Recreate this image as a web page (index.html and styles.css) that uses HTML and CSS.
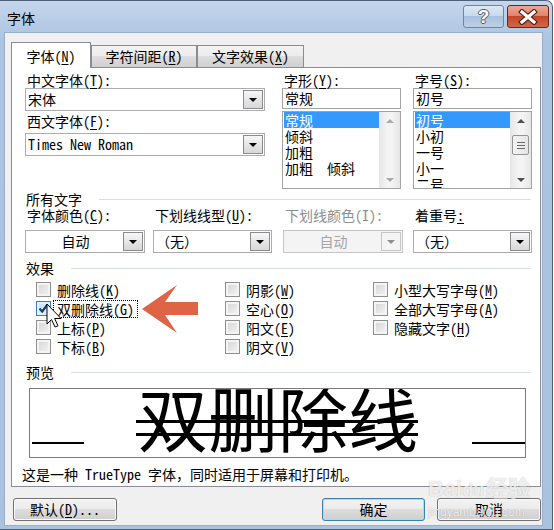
FILE: index.html
```html
<!DOCTYPE html>
<html lang="zh-CN">

<head>
  <meta charset="UTF-8">
  <title>字体</title>
  <link rel="stylesheet" href="styles.css">
</head>

<body>

  <div class="window">
    <div class="titlebar">
      <span class="title">字体</span>
      <div class="caption">
        <div class="cap-btn help">?</div>
        <div class="cap-btn close">
          <svg width="20" height="16" viewBox="0 0 20 16">
            <path d="M4 3 L16 13 M16 3 L4 13" stroke="#4a1e16" stroke-width="5.5" stroke-linecap="square" />
            <path d="M4 3 L16 13 M16 3 L4 13" stroke="#fff" stroke-width="3.2" stroke-linecap="square" />
          </svg>
        </div>
      </div>
    </div>

    <div class="client">
      <div class="tabs">
        <div class="tab active">字体(<u>N</u>)</div>
        <div class="tab">字符间距(<u>R</u>)</div>
        <div class="tab">文字效果(<u>X</u>)</div>
      </div>

      <div class="panel">
        <!-- 字体 / 字形 / 字号 -->
        <div class="font-grid">
          <div>
            <div class="label">中文字体(<u>T</u>):</div>
            <div class="combo wide"><span class="combo-text">宋体</span><span class="drop"></span></div>
            <div class="label second">西文字体(<u>F</u>):</div>
            <div class="combo wide gap"><span class="combo-text">Times New Roman</span><span class="drop"></span></div>
          </div>
          <div>
            <div class="label">字形(<u>Y</u>):</div>
            <div class="textbox">常规</div>
            <div class="listbox">
              <ul class="items">
                <li class="sel">常规</li>
                <li>倾斜</li>
                <li>加粗</li>
                <li>加粗&nbsp;&nbsp;倾斜</li>
              </ul>
              <div class="scrollbar off">
                <span class="arr up"></span>
                <span class="arr down"></span>
              </div>
            </div>
          </div>
          <div>
            <div class="label">字号(<u>S</u>):</div>
            <div class="textbox">初号</div>
            <div class="listbox">
              <ul class="items">
                <li class="sel">初号</li>
                <li>小初</li>
                <li>一号</li>
                <li>小一</li>
                <li>二号</li>
              </ul>
              <div class="scrollbar">
                <span class="arr up"></span>
                <span class="thumb"></span>
                <span class="arr down"></span>
              </div>
            </div>
          </div>
        </div>

        <!-- 所有文字 -->
        <div class="group-head">所有文字</div>
        <div class="attr-grid">
          <div>
            <div class="label">字体颜色(<u>C</u>):</div>
            <div class="combo w120"><span class="combo-text center">自动</span><span class="drop"></span></div>
          </div>
          <div>
            <div class="label">下划线线型(<u>U</u>):</div>
            <div class="combo w119"><span class="combo-text">（无）</span><span class="drop"></span></div>
          </div>
          <div>
            <div class="label disabled">下划线颜色(I):</div>
            <div class="combo w120 disabled"><span class="combo-text center">自动</span><span class="drop"></span></div>
          </div>
          <div>
            <div class="label">着重号<u>:</u></div>
            <div class="combo w119"><span class="combo-text">（无）</span><span class="drop"></span></div>
          </div>
        </div>

        <!-- 效果 -->
        <div class="group-head effects-head">效果</div>
        <div class="effects">
          <div class="effect-col">
            <div class="check"><span class="box"></span><span class="check-label">删除线(<u>K</u>)</span></div>
            <div class="check"><span class="box checked">
                <svg width="13" height="13" viewBox="0 0 13 13">
                  <path d="M2.5 6.5 L5.2 9.5 L10.5 2.5" fill="none" stroke="#1d3a7a" stroke-width="2.2" />
                </svg></span><span class="check-label focus">双删除线(<u>G</u>)</span></div>
            <div class="check"><span class="box"></span><span class="check-label">上标(<u>P</u>)</span></div>
            <div class="check"><span class="box"></span><span class="check-label">下标(<u>B</u>)</span></div>
          </div>
          <div class="effect-col">
            <div class="check"><span class="box"></span><span class="check-label">阴影(<u>W</u>)</span></div>
            <div class="check"><span class="box"></span><span class="check-label">空心(<u>O</u>)</span></div>
            <div class="check"><span class="box"></span><span class="check-label">阳文(<u>E</u>)</span></div>
            <div class="check"><span class="box"></span><span class="check-label">阴文(<u>V</u>)</span></div>
          </div>
          <div class="effect-col">
            <div class="check"><span class="box"></span><span class="check-label">小型大写字母(<u>M</u>)</span></div>
            <div class="check"><span class="box"></span><span class="check-label">全部大写字母(<u>A</u>)</span></div>
            <div class="check"><span class="box"></span><span class="check-label">隐藏文字(<u>H</u>)</span></div>
          </div>
        </div>

        <!-- 预览 -->
        <div class="group-head preview-head">预览</div>
        <div class="preview">
          <span class="base-line"></span>
          <div class="sample"><span>双删除线</span></div>
          <span class="base-line right"></span>
        </div>
        <p class="note">这是一种 TrueType 字体，同时适用于屏幕和打印机。</p>
      </div>

      <div class="buttons">
        <div class="btn">默认(<u>D</u>)...</div>
        <div class="btn default">确定</div>
        <div class="btn">取消</div>
      </div>
    </div>

    <!-- 箭头和鼠标 -->
    <svg class="overlay" width="553" height="530" viewBox="0 0 553 530">
      <polygon points="142,309 177,285 165,302 198,302 198,315 165,315 177,333" fill="#df6445" />
      <path d="M47 304 L47 324 L51.5 319.5 L55 327 L58 325.8 L54.6 318.5 L61 318.5 Z" fill="#fff" stroke="#000" stroke-width="1" />
    </svg>

    <div class="watermark">
      <div class="wm-big">Bai<span class="paw">du</span>经验</div>
      <div class="wm-small">jingyan.baidu.com</div>
    </div>
  </div>

</body>

</html>
```

FILE: styles.css
```css
* {
  box-sizing: border-box;
}

body {
  margin: 0;
  background: #fff;
  font-family: "Noto Sans Mono CJK SC", "Noto Sans CJK SC", sans-serif;
  font-size: 14px;
  color: #000;
}

u {
  text-decoration-thickness: 1px;
  text-underline-offset: 2px;
}

.window {
  position: relative;
  width: 553px;
  height: 530px;
  border: 1px solid #4e6078;
  border-left: none;
  border-radius: 0 7px 0 0;
  background: linear-gradient(#c4d6ec, #abc4e1 40px, #a9c2df);
  padding: 0 9px 3px 4px;
}

.titlebar {
  height: 31px;
  margin: 0 -9px 0 -4px;
  display: flex;
  justify-content: space-between;
  align-items: flex-start;
}

.title {
  margin-top: 9px;
  padding-left: 7px;
  line-height: 16px;
}

.caption {
  display: flex;
  gap: 3px;
  margin-top: 4px;
  padding-right: 3px;
}

.cap-btn {
  width: 41px;
  height: 23px;
  border-radius: 3px;
  display: flex;
  align-items: center;
  justify-content: center;
}

.help {
  border: 1px solid #6d84a3;
  background: linear-gradient(#dce7f5, #c8d8ec 50%, #a9c1de 50%, #bcd0e7);
  color: #fff;
  font-family: "Liberation Sans", sans-serif;
  font-weight: bold;
  font-size: 19px;
  text-shadow: 1px 0 0 #4c5d75, -1px 0 0 #4c5d75, 0 1px 0 #4c5d75, 0 -1px 0 #4c5d75;
}

.close {
  width: 42px;
  border: 1px solid #6b2518;
  background: linear-gradient(#eaa896, #da826b 50%, #c3462b 50%, #d2684c);
}

.client {
  height: 494px;
  background: #f0f0f0;
  border: 1px solid #9aaec8;
  padding: 9px 2px 0 6px;
}

/* tabs */
.tabs {
  display: flex;
  align-items: flex-start;
  height: 26px;
  margin-bottom: -1px;
  position: relative;
  z-index: 1;
}

.tab {
  height: 22px;
  margin-top: 3px;
  border: 1px solid #898c95;
  border-bottom: none;
  background: linear-gradient(#f3f3f3, #ebebeb 50%, #dddddd 50%, #d0d0d0);
  line-height: 20px;
  text-align: center;
  white-space: nowrap;
}

.tab.active {
  height: 26px;
  margin-top: 0;
  width: 80px;
  background: #fff;
  padding-top: 4px;
  line-height: 18px;
}

.tab:nth-child(2) {
  width: 106px;
}

.tab:nth-child(3) {
  width: 107px;
}

.panel {
  width: 530px;
  height: 420px;
  border: 1px solid #898c95;
  background: #fff;
  padding: 4px 7px 0 13px;
}

.label {
  height: 16px;
  line-height: 16px;
  padding-left: 2px;
  white-space: nowrap;
}

.label.second {
  margin-top: 2px;
}

.label.disabled {
  color: #8d8d8d;
}

.font-grid {
  display: grid;
  grid-template-columns: 257px 131px 120px;
  height: 117px;
}

.combo {
  display: flex;
  align-items: center;
  height: 23px;
  border: 1px solid #abadb3;
  background: #fff;
}

.combo.wide {
  width: 240px;
}

.combo.gap {
  margin-top: 4px;
}

.combo.w120 {
  width: 120px;
}

.combo.w119 {
  width: 119px;
}

.combo-text {
  flex: 1;
  padding-left: 2px;
  line-height: 21px;
  white-space: nowrap;
}

.combo-text.center {
  text-align: center;
}

.drop {
  width: 20px;
  height: 19px;
  margin-right: 1px;
  border: 1px solid #8b8b8b;
  background: linear-gradient(#f7f7f7, #e6e6e6 50%, #d8d8d8);
  display: flex;
  align-items: center;
  justify-content: center;
}

.drop::after {
  content: "";
  border-left: 4px solid transparent;
  border-right: 4px solid transparent;
  border-top: 4px solid #000;
}

.combo.disabled {
  background: #f4f4f4;
  border-color: #c3c6c9;
  color: #a5a5a5;
}

.combo.disabled .drop {
  border-color: #c6c6c6;
  background: #f4f4f4;
}

.combo.disabled .drop::after {
  border-top-color: #8f8f8f;
}

.textbox {
  width: 119px;
  height: 21px;
  border: 1px solid #a3a3a3;
  line-height: 19px;
  padding-left: 2px;
}

.listbox {
  display: flex;
  width: 119px;
  height: 78px;
  margin-top: 2px;
  border: 1px solid #a3a3a3;
  overflow: hidden;
}

.items {
  flex: 1;
  margin: 0;
  padding: 0 0 0 1px;
  list-style: none;
}

.items li {
  height: 16px;
  line-height: 16px;
  padding-left: 1px;
  white-space: nowrap;
}

.items li.sel {
  background: #3399ff;
  color: #fff;
}

.scrollbar {
  width: 21px;
  display: flex;
  flex-direction: column;
  align-items: center;
  background: linear-gradient(90deg, #e6e6e6, #f4f4f4 40%, #f4f4f4 60%, #e6e6e6);
}

.arr {
  height: 17px;
  display: flex;
  align-items: center;
  justify-content: center;
}

.arr.down {
  margin-top: auto;
}

.arr.up::after {
  content: "";
  border-left: 4px solid transparent;
  border-right: 4px solid transparent;
  border-bottom: 4px solid #4f4f4f;
}

.arr.down::after {
  content: "";
  border-left: 4px solid transparent;
  border-right: 4px solid transparent;
  border-top: 4px solid #4f4f4f;
}

.scrollbar.off .arr.up::after {
  border-bottom-color: #a9a9a9;
}

.scrollbar.off .arr.down::after {
  border-top-color: #a9a9a9;
}

.thumb {
  width: 17px;
  height: 20px;
  margin-top: 6px;
  border: 1px solid #959595;
  border-radius: 2px;
  background: linear-gradient(90deg, #f4f4f4, #e4e4e4);
  display: flex;
  align-items: center;
  justify-content: center;
}

.thumb::after {
  content: "";
  width: 8px;
  height: 7px;
  background: repeating-linear-gradient(#6d6d6d 0 1px, transparent 1px 3px);
}

/* group headings */
.group-head {
  display: flex;
  align-items: center;
  height: 16px;
  line-height: 16px;
  margin-top: 2px;
  padding-left: 1px;
  white-space: nowrap;
}

.group-head::after {
  content: "";
  flex: 1;
  height: 1px;
  background: #d5dfe5;
  margin-left: 17px;
  margin-right: 2px;
}

.attr-grid {
  display: grid;
  grid-template-columns: 128px 130px 130px 120px;
}

.attr-grid .combo {
  margin-top: 7px;
}

.effects-head {
  margin-top: 7px;
}

.effects {
  display: grid;
  grid-template-columns: 189px 148px 1fr;
  padding-left: 11px;
  margin-top: 4px;
  height: 76px;
}

.check {
  display: flex;
  align-items: center;
  height: 19px;
}

.box {
  width: 15px;
  height: 15px;
  margin-right: 2px;
  border: 1px solid #8e8f8f;
  background: linear-gradient(135deg, #d3d3d3, #f5f5f5);
  box-shadow: inset 0 0 0 2px #f4f4f4;
  display: flex;
  align-items: center;
  justify-content: center;
}

.box.checked {
  border-color: #3c7fb1;
  background: linear-gradient(135deg, #bfe3f7, #eaf6fd);
  box-shadow: inset 0 0 0 2px #dff1fb;
}

.check-label {
  border: 1px dotted transparent;
  padding: 0 3px;
  line-height: 16px;
  white-space: nowrap;
}

.check-label.focus {
  border-color: #000;
}

/* preview */
.preview-head {
  margin-top: 8px;
}

.preview {
  display: flex;
  align-items: flex-start;
  width: 497px;
  height: 70px;
  margin: 8px 0 0 4px;
  border: 1px solid #7a7a7a;
  overflow: hidden;
}

.base-line {
  width: 52px;
  height: 2px;
  margin: 53px 0 0 2px;
  background: #000;
}

.base-line.right {
  width: 53px;
  margin-left: 0;
}

.sample {
  flex: 1;
  text-align: center;
  margin-top: -7px;
  font-family: "Noto Sans CJK SC", sans-serif;
  font-size: 70px;
  line-height: 70px;
}

.sample span {
  display: inline-block;
  position: relative;
  line-height: 70px;
}

.sample span::after {
  content: "";
  position: absolute;
  left: -2px;
  right: 0;
  top: 38px;
  height: 10px;
  border-top: 3px solid #000;
  border-bottom: 3px solid #000;
}

.note {
  margin: 8px 0 0 -3px;
  line-height: 16px;
  white-space: nowrap;
}

/* bottom buttons */
.buttons {
  display: flex;
  margin-top: 11px;
  padding-left: 2px;
  margin-right: -1px;
  gap: 12px;
}

.btn {
  width: 104px;
  height: 23px;
  border: 1px solid #707070;
  border-radius: 3px;
  background: linear-gradient(#f2f2f2, #ebebeb 50%, #dddddd 50%, #cfcfcf);
  box-shadow: inset 0 0 0 1px #fbfbfb;
  text-align: center;
  line-height: 21px;
}

.btn.default {
  width: 103px;
  margin-left: auto;
  border-color: #3c7fb1;
  box-shadow: inset 0 0 0 1px #a7dcf7;
}

.overlay {
  position: absolute;
  left: 0;
  top: -1px;
}

.watermark {
  position: absolute;
  left: 428px;
  top: 476px;
  color: rgba(255, 255, 255, 0.8);
  font-family: "Liberation Sans", sans-serif;
  text-shadow: 0 0 1px rgba(0, 0, 0, 0.3);
  pointer-events: none;
}

.wm-big {
  font-size: 22px;
  font-weight: bold;
  line-height: 24px;
}

.wm-big .paw {
  font-size: 18px;
  margin-right: 2px;
}

.wm-small {
  font-size: 12px;
  line-height: 14px;
  margin-top: 3px;
}
```
